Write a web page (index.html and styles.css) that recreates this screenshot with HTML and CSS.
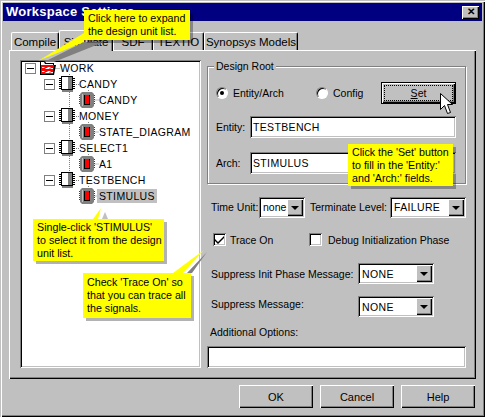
FILE: index.html
```html
<!DOCTYPE html>
<html lang="en">
<head>
<meta charset="utf-8">
<title>Workspace Settings</title>
<link rel="stylesheet" href="styles.css">
</head>
<body>
<svg class="defs" width="0" height="0" aria-hidden="true">
  <symbol id="chip" viewBox="0 0 16 16">
    <path d="M0 2h2v1H0zM0 4h2v1H0zM0 6h2v1H0zM0 8h2v1H0zM0 10h2v1H0zM0 12h2v1H0zM14 2h2v1h-2zM14 4h2v1h-2zM14 6h2v1h-2zM14 8h2v1h-2zM14 10h2v1h-2zM14 12h2v1h-2z" fill="#000"/>
    <rect x="2" y="0" width="12" height="14" fill="#000"/>
    <rect x="3" y="1" width="6" height="12" fill="#fff"/>
    <rect x="9" y="1" width="4" height="12" fill="#808080"/>
    <rect x="3" y="14" width="11" height="2" fill="#808080"/>
  </symbol>
  <symbol id="unit" viewBox="0 0 16 16">
    <path d="M0 3h2v1H0zM0 5h2v1H0zM0 7h2v1H0zM0 9h2v1H0zM0 11h2v1H0zM14 3h2v1h-2zM14 5h2v1h-2zM14 7h2v1h-2zM14 9h2v1h-2zM14 11h2v1h-2z" fill="#404040"/>
    <path d="M3 0h10l2 2v12l-2 2H3l-2-2V2z" fill="#808080"/>
    <rect x="3" y="2" width="1" height="12" fill="#c0c0c0"/>
    <rect x="5" y="3" width="6" height="10" fill="#000"/>
    <rect x="6" y="3" width="4" height="9" fill="#f00"/>
  </symbol>
  <symbol id="lib" viewBox="0 0 16 16">
    <path d="M0 3V1h5l1 2h8v2h2l-2 10H0z" fill="#000"/>
    <path d="M1 4V2h3l1 2h8v1H1z" fill="#fff"/>
    <path d="M1 5h13l-1 9H1z" fill="#f00"/>
    <path d="M2 7h2l1 1h2l1-1h2l1 1h2v1h-2l-1-1-1 1H6L5 8H2zM2 11h2l1 1h2l1-1h2l1 1h2v1h-2l-1-1-1 1H6l-1-1H2z" fill="#fff"/>
  </symbol>
</svg>

<div class="window">
  <div class="titlebar">
    <span class="title">Workspace Settings</span>
    <span class="close">&#10005;</span>
  </div>

  <div class="body">
    <div class="tabs">
      <span class="tab tab-compile">Compile</span>
      <span class="tab tab-active">Simulate</span>
      <span class="tab tab-sdf">SDF</span>
      <span class="tab tab-textio">TEXTIO</span>
      <span class="tab tab-syn">Synopsys Models</span>
    </div>

    <div class="panel">
      <div class="tree">
        <svg class="tree-lines" width="181" height="308" aria-hidden="true">
          <path d="M35.5 8.5H40M49.5 14V120M54 24.5H60M54 56.5H60M54 88.5H60M54 120.5H60M68.5 30V40H79M68.5 62V72H79M68.5 94V104H79M68.5 126V136H79" fill="none" stroke="#808080" stroke-dasharray="1 1"/>
        </svg>
        <div class="row l0"><span class="exp"></span><svg class="ico"><use href="#lib"/></svg><span class="name">WORK</span></div>
        <div class="row l1"><span class="exp"></span><svg class="ico"><use href="#chip"/></svg><span class="name">CANDY</span></div>
        <div class="row l2"><svg class="ico"><use href="#unit"/></svg><span class="name">CANDY</span></div>
        <div class="row l1"><span class="exp"></span><svg class="ico"><use href="#chip"/></svg><span class="name">MONEY</span></div>
        <div class="row l2"><svg class="ico"><use href="#unit"/></svg><span class="name">STATE_DIAGRAM</span></div>
        <div class="row l1"><span class="exp"></span><svg class="ico"><use href="#chip"/></svg><span class="name">SELECT1</span></div>
        <div class="row l2"><svg class="ico"><use href="#unit"/></svg><span class="name">A1</span></div>
        <div class="row l1"><span class="exp"></span><svg class="ico"><use href="#chip"/></svg><span class="name">TESTBENCH</span></div>
        <div class="row l2"><svg class="ico"><use href="#unit"/></svg><span class="name selected">STIMULUS</span></div>
      </div>

      <div class="options">
        <div class="group">
          <span class="legend">Design Root</span>
          <div class="root-row">
            <span class="radio-opt opt-entity"><span class="radio on"></span>Entity/Arch</span>
            <span class="radio-opt opt-config"><span class="radio"></span>Config</span>
            <span class="btn btn-set"><span class="focus"><u>S</u>et</span></span>
          </div>
          <div class="field field-entity"><span class="field-label">Entity:</span><span class="input">TESTBENCH</span></div>
          <div class="field field-arch"><span class="field-label">Arch:</span><span class="input">STIMULUS</span></div>
        </div>

        <div class="time-row">
          <span class="lab-time">Time Unit:</span>
          <span class="combo combo-time"><span class="val">none</span><span class="drop"></span></span>
          <span class="lab-term">Terminate Level:</span>
          <span class="combo combo-term"><span class="val">FAILURE</span><span class="drop"></span></span>
        </div>

        <div class="check-row">
          <span class="check-opt opt-trace"><span class="check"><svg width="9" height="9" viewBox="0 0 9 9"><path d="M0 4l3 3 6-6v2L3 9 0 6z" fill="#000"/></svg></span>Trace On</span>
          <span class="check-opt opt-debug"><span class="check"></span>Debug Initialization Phase</span>
        </div>

        <div class="sup-row sup-init">
          <span class="sup-label">Suppress Init Phase Message:</span>
          <span class="combo combo-none"><span class="val">NONE</span><span class="drop"></span></span>
        </div>
        <div class="sup-row sup-msg">
          <span class="sup-label sup-label-up">Suppress Message:</span>
          <span class="combo combo-none"><span class="val">NONE</span><span class="drop"></span></span>
        </div>

        <div class="add-label">Additional Options:</div>
        <div class="input input-add"></div>
      </div>
    </div>

    <div class="footer">
      <span class="btn">OK</span>
      <span class="btn">Cancel</span>
      <span class="btn">Help</span>
    </div>
  </div>

  <svg class="pointers" width="485" height="417" aria-hidden="true">
    <path d="M44 62 84 42H104L54 62z" fill="#808080"/>
    <path d="M38 61 84 33V42z" fill="#ff0"/>
    <path d="M105 212 102 219H108z" fill="#c0c0c0"/>
    <path d="M101 208 93 219H98z" fill="#ff0"/>
    <path d="M207 252 187 273H192z" fill="#808080"/>
    <path d="M204 250 173 273H183z" fill="#ff0"/>
  </svg>

  <svg class="cursor" width="14" height="22" viewBox="0 0 14 22" aria-hidden="true">
    <path d="M.5.5V16.5L4.5 12.5 7.5 20.5 10.5 19.5 7.5 11.5H12.5z" fill="#fff" stroke="#000"/>
  </svg>

  <div class="note note-expand">Click here to expand<br>the design unit list.</div>
  <div class="note note-set">Click the 'Set' button<br>to fill in the 'Entity:'<br>and 'Arch:' fields.</div>
  <div class="note note-select">Single-click 'STIMULUS'<br>to select it from the design<br>unit list.</div>
  <div class="note note-trace">Check 'Trace On' so<br>that you can trace all<br>the signals.</div>
</div>
</body>
</html>
```

FILE: styles.css
```css
* { box-sizing: border-box; }
html, body { margin: 0; padding: 0; background: #c0c0c0; }
body { font: 11px/14px "Liberation Sans", Arial, sans-serif; color: #000; overflow: hidden; white-space: nowrap; }
.defs { position: absolute; }

.window {
  position: relative;
  width: 485px;
  height: 417px;
  padding: 3px;
  background: #c0c0c0;
  box-shadow: inset 1px 1px 0 #c0c0c0, inset 2px 2px 0 #fff, inset -1px -1px 0 #000, inset -2px -2px 0 #808080;
}

.titlebar {
  display: flex;
  align-items: center;
  justify-content: space-between;
  height: 18px;
  padding: 0 3px 0 3px;
  background: #000080;
  color: #fff;
}
.title { font-weight: bold; font-size: 13px; letter-spacing: .25px; }
.close {
  width: 17px;
  height: 13px;
  background: #c0c0c0;
  color: #000;
  font-size: 10px;
  line-height: 12px;
  text-align: center;
  font-weight: bold;
  box-shadow: inset 1px 1px 0 #fff, inset -1px -1px 0 #000, inset -2px -2px 0 #808080;
}

.body { padding: 8px 6px 0; }

.tabs { display: flex; height: 21px; padding-left: 2px; align-items: flex-end; position: relative; z-index: 1; }
.tab {
  height: 18px;
  padding-top: 2px;
  text-align: center;
  font-size: 11.5px;
  background: #c0c0c0;
  border-top: 1px solid #fff;
  border-left: 1px solid #fff;
  border-right: 1px solid #000;
  border-radius: 2px 2px 0 0;
  box-shadow: inset -1px 0 0 #808080;
}
.tab-compile { width: 48px; }
.tab-active { width: 54px; height: 21px; margin-top: -3px; padding-top: 4px; position: relative; top: 1px; }
.tab-sdf { width: 40px; }
.tab-textio { width: 51px; }
.tab-syn { width: 94px; }

.panel {
  display: grid;
  grid-template-columns: 181px 259px;
  column-gap: 6px;
  height: 329px;
  padding: 10px 9px 0 11px;
  background: #c0c0c0;
  box-shadow: inset 1px 1px 0 #fff, inset -1px -1px 0 #000, inset -2px -2px 0 #808080;
}

.tree {
  position: relative;
  height: 308px;
  background: #fff;
  box-shadow: inset 1px 1px 0 #808080, inset -1px -1px 0 #fff, inset 2px 2px 0 #000, inset -2px -2px 0 #c0c0c0;
}
.tree-lines { position: absolute; left: 0; top: 0; }
.row { position: relative; display: flex; align-items: center; height: 16px; }
.l0 { padding-left: 5px; }
.l1 { padding-left: 24px; }
.l2 { padding-left: 59px; }
.exp {
  position: relative;
  width: 11px;
  height: 11px;
  margin-right: 4px;
  background: #fff;
  border: 1px solid #808080;
}
.exp::after { content: ""; position: absolute; left: 1px; top: 4px; width: 7px; height: 1px; background: #000; }
.ico { width: 16px; height: 16px; flex: none; }
.name { margin-left: 2px; padding: 0 2px; font-size: 10.5px; line-height: 14px; letter-spacing: .35px; }
.selected { background: #c0c0c0; }

.options { display: flex; flex-direction: column; padding-top: 6px; font-size: 10.5px; }

.group {
  height: 118px;
  border: 1px solid #808080;
  box-shadow: 1px 1px 0 #fff, inset 1px 1px 0 #fff;
  padding: 0 9px 0 8px;
}
.legend { display: block; width: max-content; margin: -8px 0 0 -2px; padding: 0 2px; background: #c0c0c0; }
.root-row { display: flex; align-items: center; height: 22px; margin-top: 9px; }
.radio-opt { display: flex; align-items: center; gap: 5px; }
.opt-entity { width: 100px; }
.opt-config { width: 65px; }
.radio {
  position: relative;
  width: 12px;
  height: 12px;
  flex: none;
  border-radius: 50%;
  background: #fff;
  border: 1px solid;
  border-color: #808080 #fff #fff #808080;
  box-shadow: inset 1px 1px 0 #000;
}
.radio.on::after { content: ""; position: absolute; left: 3px; top: 3px; width: 4px; height: 4px; border-radius: 50%; background: #000; }

.btn {
  display: flex;
  align-items: center;
  justify-content: center;
  width: 74px;
  height: 23px;
  background: #c0c0c0;
  box-shadow: inset 1px 1px 0 #fff, inset -1px -1px 0 #000, inset -2px -2px 0 #808080;
}
.btn-set {
  width: 75px;
  height: 22px;
  padding: 3px;
  box-shadow: inset 1px 1px 0 #000, inset -1px -1px 0 #000, inset 2px 2px 0 #fff, inset -2px -2px 0 #000, inset -3px -3px 0 #808080;
}
.focus { display: flex; align-items: center; justify-content: center; width: 100%; height: 100%; white-space: pre; border: 1px dotted #000; }

.field { display: flex; align-items: center; height: 22px; }
.field-entity { margin-top: 12px; }
.field-arch { margin-top: 14px; }
.field-label { width: 34px; flex: none; }

.input {
  display: flex;
  align-items: center;
  flex: 1;
  height: 22px;
  padding-left: 3px;
  background: #fff;
  font-size: 10.5px;
  letter-spacing: .35px;
  box-shadow: inset 1px 1px 0 #808080, inset -1px -1px 0 #fff, inset 2px 2px 0 #000, inset -2px -2px 0 #c0c0c0;
}
.input-add { flex: none; width: 259px; }

.time-row { display: flex; align-items: center; height: 20px; margin-top: 13px; padding-left: 4px; }
.lab-time { width: 48px; }
.lab-term { width: 80px; margin-left: 5px; }
.combo {
  display: flex;
  align-items: center;
  justify-content: space-between;
  height: 21px;
  padding: 2px 2px 2px 4px;
  background: #fff;
  font-size: 10.5px;
  letter-spacing: .35px;
  box-shadow: inset 1px 1px 0 #808080, inset -1px -1px 0 #fff, inset 2px 2px 0 #000, inset -2px -2px 0 #c0c0c0;
}
.combo-time { width: 46px; letter-spacing: 0; }
.combo-term { width: 76px; }
.combo-none { width: 76px; }
.drop {
  position: relative;
  width: 16px;
  height: 17px;
  flex: none;
  background: #c0c0c0;
  box-shadow: inset 1px 1px 0 #fff, inset -1px -1px 0 #000, inset -2px -2px 0 #808080;
}
.drop::after {
  content: "";
  position: absolute;
  left: 4px;
  top: 7px;
  border: 4px solid transparent;
  border-top-color: #000;
  border-bottom: 0;
}

.check-row { display: flex; align-items: center; height: 13px; margin-top: 16px; padding-left: 6px; }
.check-opt { display: flex; align-items: center; }
.opt-trace { width: 96px; gap: 4px; }
.opt-debug { gap: 6px; }
.check {
  display: flex;
  align-items: center;
  justify-content: center;
  width: 13px;
  height: 13px;
  background: #fff;
  box-shadow: inset 1px 1px 0 #808080, inset -1px -1px 0 #fff, inset 2px 2px 0 #000, inset -2px -2px 0 #c0c0c0;
}

.sup-row { display: flex; align-items: center; height: 21px; padding-left: 4px; }
.sup-init { margin-top: 17px; }
.sup-msg { margin-top: 12px; }
.sup-label { width: 147px; }
.sup-label-up { margin-bottom: 6px; }

.add-label { margin: 8px 0 7px 3px; }

.footer { display: flex; justify-content: flex-end; gap: 7px; margin-top: 6px; padding-right: 1px; }

.pointers { position: absolute; left: 0; top: 0; z-index: 2; pointer-events: none; }
.cursor { position: absolute; left: 440px; top: 93px; z-index: 4; }

.note {
  position: absolute;
  z-index: 3;
  padding: 2px 3px 3px 4px;
  background: #ff0;
  font-size: 10.7px;
  line-height: 13px;
  box-shadow: 3px 3px 0 rgba(0, 0, 0, .3);
}
.note-expand { left: 84px; top: 10px; width: 106px; height: 30px; }
.note-set { left: 348px; top: 144px; width: 105px; height: 42px; }
.note-select { left: 33px; top: 219px; width: 131px; height: 42px; }
.note-trace { left: 83px; top: 273px; width: 108px; height: 45px; padding-top: 3px; }
```
